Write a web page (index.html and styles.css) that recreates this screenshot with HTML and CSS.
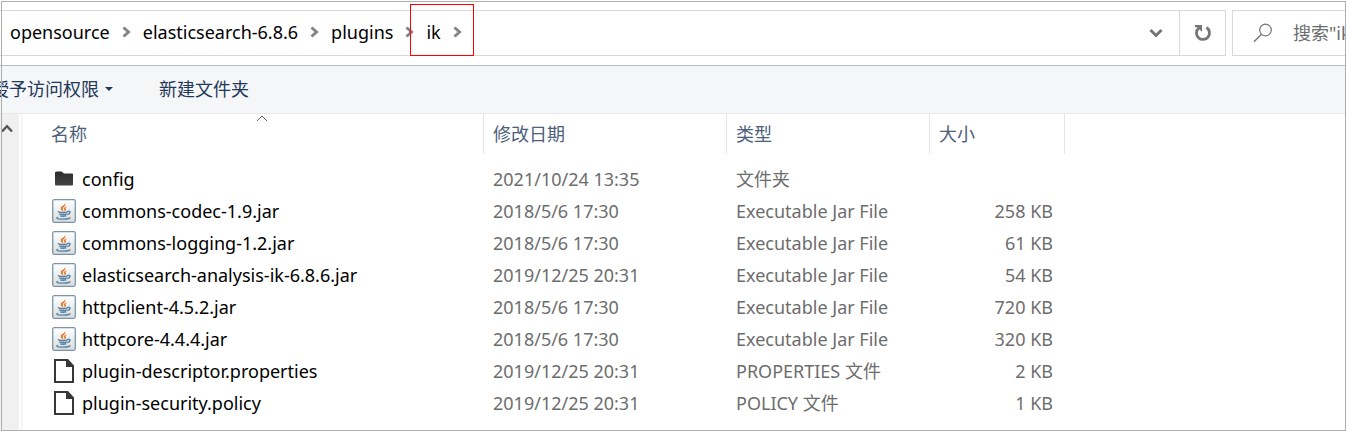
FILE: index.html
```html
<!DOCTYPE html>
<html lang="zh-CN">
<head>
  <meta charset="UTF-8">
  <title>ik</title>
  <link rel="stylesheet" href="styles.css">
</head>
<body>
  <!-- 图标 -->
  <svg class="sprite" aria-hidden="true">
    <defs>
      <linearGradient id="tile" x1="0" y1="0" x2="0" y2="1">
        <stop offset="0" stop-color="#ffffff"/>
        <stop offset="1" stop-color="#d6dce1"/>
      </linearGradient>
      <linearGradient id="dark" x1="0" y1="0" x2="0" y2="1">
        <stop offset="0" stop-color="#2c2c2c"/>
        <stop offset="1" stop-color="#444444"/>
      </linearGradient>
    </defs>
    <symbol id="chevron" viewBox="0 0 9 12">
      <path d="M1.5 1.5 6.5 6 1.5 10.5" fill="none" stroke="#858585" stroke-width="3"/>
    </symbol>
    <symbol id="folder" viewBox="0 0 24 24">
      <path d="M3 6Q3 4.500 4.500 4.500H9.500L12 6.500H20Q21 6.500 21 7.500V17.500Q21 18.500 20 18.500H4Q3 18.500 3 17.500Z" fill="url(#dark)"/>
    </symbol>
    <symbol id="jar" viewBox="0 0 24 24">
      <rect x=".7" y=".7" width="22.600" height="22.600" rx="1.500" fill="url(#tile)" stroke="#7f95a5" stroke-width="1.300"/>
      <path d="M13 3.800C13.700 6.300 8.300 7.200 8.700 9.700 8.900 11 10.500 11.500 11 12.600 11.600 11.200 10.500 10.400 11 9.200 11.500 7.900 14.500 6.300 13 3.800ZM15 7.300C12.300 8 11.300 9.200 12.200 10.500 12.700 11.200 12.700 11.800 12.200 12.600 14.300 11.700 14.500 10.700 13.700 9.800 13.200 9 13.900 8.300 15 7.300Z" fill="#e8782a"/>
      <path d="M5.800 12.600Q11 14.400 16 12.600M7 14.800Q11 16.200 15 14.800M8 16.800Q11 17.700 14.300 16.800M15.800 12.400C19 11.600 18.800 14.600 15.300 15.500M5.500 18Q3.800 19.500 7 19.900 12 20.600 17 19.500L18.300 18.500" fill="none" stroke="#57809f" stroke-width="1.400"/>
    </symbol>
    <symbol id="file" viewBox="0 0 24 24">
      <path d="M3 1H15.500L21 7V23H3Z" fill="#fff"/>
      <path d="M2 0H16L22 6.500V24H2ZM4 2V22H20V8H14V2Z" fill="#383838" fill-rule="evenodd"/>
    </symbol>
  </svg>

  <div class="window">
    <!-- 地址栏 -->
    <header class="topbar">
      <nav class="address" aria-label="地址">
        <ol class="crumbs">
          <li class="crumb"><a href="#">opensource</a><svg class="chevron"><use href="#chevron"/></svg></li>
          <li class="crumb"><a href="#">elasticsearch-6.8.6</a><svg class="chevron"><use href="#chevron"/></svg></li>
          <li class="crumb"><a href="#">plugins</a><svg class="chevron"><use href="#chevron"/></svg></li>
          <li class="crumb marked"><a href="#">ik</a><svg class="chevron"><use href="#chevron"/></svg></li>
        </ol>
        <button class="icon-btn" type="button" aria-label="以前的位置">
          <svg width="14" height="10" viewBox="0 0 14 10"><path d="M1.500 2 7 7.500 12.500 2" fill="none" stroke="#757575" stroke-width="3"/></svg>
        </button>
        <button class="icon-btn refresh" type="button" aria-label="刷新">
          <svg width="18" height="18" viewBox="0 0 18 18"><path d="M12.500 3.500A6.500 6.500 0 1 1 4.800 4" fill="none" stroke="#757575" stroke-width="2.800"/><path d="M1 1H8V8L5.800 5.800 3.500 3.300H1Z" fill="#757575"/></svg>
        </button>
      </nav>
      <label class="search">
        <svg width="20" height="20" viewBox="0 0 20 20"><circle cx="12.500" cy="7" r="5.800" fill="none" stroke="#757575" stroke-width="1.200"/><path d="M8.500 11.300 1 18.700" stroke="#757575" stroke-width="1.400"/></svg>
        <input class="search-input" type="text" placeholder="搜索&quot;ik&quot;" aria-label="搜索">
      </label>
    </header>

    <!-- 工具栏 -->
    <div class="toolbar">
      <button class="tool" type="button">授予访问权限<span class="caret"></span></button>
      <button class="tool" type="button">新建文件夹</button>
    </div>

    <main class="content">
      <div class="side">
        <svg width="12" height="9" viewBox="0 0 12 9"><path d="M1 7.500 6 2.200 11 7.500" fill="none" stroke="#555" stroke-width="2.400"/></svg>
      </div>
      <!-- 文件列表 -->
      <table class="files">
        <colgroup>
          <col class="col-name">
          <col class="col-date">
          <col class="col-type">
          <col class="col-size">
          <col>
        </colgroup>
        <thead>
          <tr>
            <th class="sorted">
              <svg class="sort" width="12" height="7" viewBox="0 0 12 7"><path d="M1 6 6 1 11 6" fill="none" stroke="#666"/></svg>
              <button class="sort-btn" type="button">名称</button>
            </th>
            <th><button class="sort-btn" type="button">修改日期</button></th>
            <th><button class="sort-btn" type="button">类型</button></th>
            <th><button class="sort-btn" type="button">大小</button></th>
            <td></td>
          </tr>
        </thead>
        <tbody>
          <tr><td><div class="name"><svg class="icon"><use href="#folder"/></svg>config</div></td><td>2021/10/24 13:35</td><td>文件夹</td><td></td><td></td></tr>
          <tr><td><div class="name"><svg class="icon"><use href="#jar"/></svg>commons-codec-1.9.jar</div></td><td>2018/5/6 17:30</td><td>Executable Jar File</td><td class="size">258 KB</td><td></td></tr>
          <tr><td><div class="name"><svg class="icon"><use href="#jar"/></svg>commons-logging-1.2.jar</div></td><td>2018/5/6 17:30</td><td>Executable Jar File</td><td class="size">61 KB</td><td></td></tr>
          <tr><td><div class="name"><svg class="icon"><use href="#jar"/></svg>elasticsearch-analysis-ik-6.8.6.jar</div></td><td>2019/12/25 20:31</td><td>Executable Jar File</td><td class="size">54 KB</td><td></td></tr>
          <tr><td><div class="name"><svg class="icon"><use href="#jar"/></svg>httpclient-4.5.2.jar</div></td><td>2018/5/6 17:30</td><td>Executable Jar File</td><td class="size">720 KB</td><td></td></tr>
          <tr><td><div class="name"><svg class="icon"><use href="#jar"/></svg>httpcore-4.4.4.jar</div></td><td>2018/5/6 17:30</td><td>Executable Jar File</td><td class="size">320 KB</td><td></td></tr>
          <tr><td><div class="name"><svg class="icon"><use href="#file"/></svg>plugin-descriptor.properties</div></td><td>2019/12/25 20:31</td><td>PROPERTIES 文件</td><td class="size">2 KB</td><td></td></tr>
          <tr><td><div class="name"><svg class="icon"><use href="#file"/></svg>plugin-security.policy</div></td><td>2019/12/25 20:31</td><td>POLICY 文件</td><td class="size">1 KB</td><td></td></tr>
        </tbody>
      </table>
    </main>
  </div>
</body>
</html>
```

FILE: styles.css
```css
* {
  box-sizing: border-box;
}
body {
  margin: 0;
  background-color: #fff;
  color: #000;
  font-family: "Noto Sans", "Noto Sans CJK SC", sans-serif;
  font-size: 18px;
  line-height: 24px;
  overflow: hidden;
}
button, input {
  font: inherit;
  background: none;
  border: none;
  padding: 0;
}
.sprite {
  position: absolute;
  width: 0;
  height: 0;
}
.window {
  position: relative;
  display: flex;
  flex-direction: column;
  min-height: 100vh;
}
/* outer frame, drawn over the content */
.window::after {
  content: "";
  position: absolute;
  inset: 1px 0 0 1px;
  border: 1px solid #adadad;
  pointer-events: none;
}

.topbar {
  display: flex;
  gap: 6px;
  padding: 10px 0 9px;
  border-bottom: 1px solid #b9babc;
}
.address {
  display: flex;
  flex: 1;
  height: 46px;
  border: 1px solid #d9d9d9;
  border-left: none;
}
.crumbs {
  display: flex;
  flex: 1;
  align-items: center;
  gap: 12px;
  margin: 0;
  padding: 0 0 2px 10px;
  list-style: none;
}
.crumb {
  display: flex;
  align-items: center;
  gap: 12px;
}
.crumb a {
  color: #000;
  text-decoration: none;
}
.chevron {
  width: 9px;
  height: 12px;
}
.marked {
  position: relative;
}
.marked::after {
  content: "";
  position: absolute;
  inset: -16px -12px -12px -16px;
  border: 1px solid #f00;
}
.icon-btn {
  display: flex;
  align-items: center;
  justify-content: center;
  width: 46px;
}
.refresh {
  border-left: 1px solid #d9d9d9;
}
.search {
  display: flex;
  align-items: center;
  gap: 20px;
  width: 114px;
  height: 46px;
  padding-left: 20px;
  border: 1px solid #d9d9d9;
  border-right: none;
}
.search svg {
  flex: none;
}
.search-input {
  flex: 1;
  min-width: 0;
  outline: none;
}
.search-input::placeholder {
  color: #6d6d6d;
  opacity: 1;
}

.toolbar {
  display: flex;
  gap: 46px;
  height: 48px;
  margin-left: -9px;
  padding-bottom: 2px;
  background-color: #f5f6f8;
  border-bottom: 1px solid #e6e7e9;
}
.tool {
  display: flex;
  align-items: center;
  gap: 6px;
  color: #1e395b;
}
.caret {
  border: 4px solid transparent;
  border-top-color: #1e395b;
  border-bottom: none;
}

.content {
  display: flex;
  flex: 1;
}
.side {
  width: 23px;
  padding: 10px 0 0 1px;
  background: linear-gradient(to right, #f0f0f0 19px, #fff 19px, #fff 21px, #f5f5f5 21px);
}
.side svg {
  display: block;
}
.files {
  flex: 1;
  align-self: flex-start;
  table-layout: fixed;
  border-collapse: separate;
  border-spacing: 0;
  color: #6d6d6d;
}
.col-name {
  width: 461px;
}
.col-date {
  width: 243px;
}
.col-type {
  width: 203px;
}
.col-size {
  width: 135px;
}
.files th {
  position: relative;
  height: 40px;
  padding: 0 0 0 9px;
  border-right: 1px solid #e5e5e5;
  text-align: left;
  font-weight: normal;
}
.files .sorted {
  padding-left: 28px;
}
.sort-btn {
  display: block;
  color: #4c607a;
}
.sort {
  position: absolute;
  top: 1px;
  left: calc(50% + 3px);
}
.files tbody::before {
  content: "";
  display: block;
  height: 9px;
}
.files td {
  padding: 0 0 0 9px;
}
.files tbody td {
  height: 32px;
}
.files .size {
  padding-right: 12px;
  text-align: right;
}
.name {
  display: flex;
  align-items: center;
  gap: 6px;
  padding-left: 20px;
  color: #000;
}
.icon {
  width: 24px;
  height: 24px;
}
```
